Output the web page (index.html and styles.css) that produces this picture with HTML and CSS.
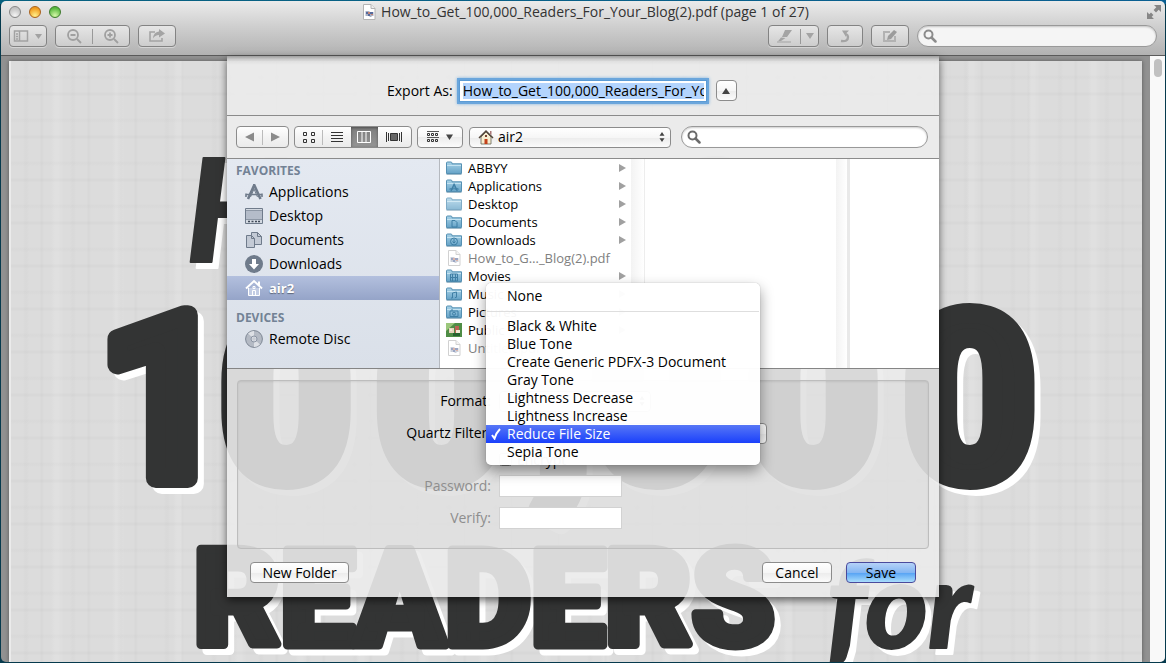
FILE: index.html
```html
<!DOCTYPE html>
<html lang="en">
<head>
    <meta charset="UTF-8">
    <meta name="viewport" content="width=device-width, initial-scale=1.0">
    <title>How_to_Get_100,000_Readers_For_Your_Blog(2).pdf</title>
    <link rel="stylesheet" href="styles.css">
</head>
<body>
    <svg class="defs" aria-hidden="true">
        <defs>
            <linearGradient id="folder-fill" x1="0" y1="0" x2="0" y2="1">
                <stop offset="0" stop-color="#a9d3e8"/>
                <stop offset="1" stop-color="#66a3c7"/>
            </linearGradient>
            <symbol id="folder" viewBox="0 0 16 14">
                <path d="M.5 12.500V2q0-1 1-1h3.500q.8 0 1 1v.8h9.500v9.700z" fill="url(#folder-fill)" stroke="#5590b3"/>
                <path d="M1 4.500h14" stroke="#c3e2f1"/>
                <path d="M.5 13.500h15" stroke="#3d7394" stroke-opacity=".5"/>
            </symbol>
            <symbol id="pdf" viewBox="0 0 16 16">
                <path d="M2.500.5h7.500l4 4v11H2.500z" fill="#fff" stroke="#b4b4b4"/>
                <path d="M10 .5v4h4" fill="#eee" stroke="#b4b4b4"/>
                <path d="M4.500 7h4v1h4v4h-2v1h-2v-1h-4z" fill="#a9b1c4"/>
                <path d="M5 8h2v2H5zM9 8h3v2H9zM7 10h2v2H7z" fill="#566a9c"/>
                <path d="M7 8h2v2H7zM10 10h2v1h-2z" fill="#c78473"/>
            </symbol>
            <symbol id="search" viewBox="0 0 14 14">
                <circle cx="5.500" cy="5.500" r="4" fill="none" stroke="currentColor" stroke-width="2"/>
                <path d="M8.500 8.500l4 4" stroke="currentColor" stroke-width="2.500" stroke-linecap="round"/>
            </symbol>
            <symbol id="apps" viewBox="0 0 18 18">
                <path d="M9.500 1.500L3 16M9 1.500L15.500 16" stroke="currentColor" stroke-width="2.600" fill="none"/>
                <path d="M9 6l-3.500 8M9 6l3.500 8" stroke="currentColor" stroke-width="1" fill="none"/>
                <path d="M1 11.500h16M1 14v-3.500M17 14v-3.500" stroke="currentColor" stroke-width="1.600" fill="none"/>
            </symbol>
            <symbol id="updown" viewBox="0 0 6 10">
                <path d="M3 0l2.500 3.800h-5zM3 10L.5 6.200h5z" fill="#444"/>
            </symbol>
        </defs>
    </svg>

    <div class="window">
        <header class="header">
            <div class="titlebar">
                <div class="lights">
                    <button class="light" aria-label="Close"></button>
                    <button class="light light-min" aria-label="Minimize"></button>
                    <button class="light light-max" aria-label="Zoom"></button>
                </div>
                <h1 class="title">
                    <svg width="14" height="16" viewBox="1 0 14 16"><use href="#pdf" width="16" height="16"/></svg>
                    How_to_Get_100,000_Readers_For_Your_Blog(2).pdf (page 1 of 27)
                </h1>
                <button class="fullscreen" aria-label="Full screen">
                    <svg width="16" height="16" viewBox="0 0 16 16" fill="#868686"><path d="M8 1h7v7l-2.300-2.300L10 8.400 7.600 6l2.700-2.700zM1 8l2.300 2.300L5 8.600 7.400 11l-1.700 1.700L8 15H1z"/></svg>
                </button>
            </div>
            <div class="toolbar">
                <button class="tool tool-view" aria-label="View">
                    <svg width="30" height="14" viewBox="0 0 30 14"><path d="M1.500 2h13v10h-13zM6.500 2v10M3 5h2M3 7.500h2M3 10h2" fill="none" stroke="#a2a2a2" stroke-width="1.500"/><path d="M22 5h7l-3.500 5z" fill="#a2a2a2"/></svg>
                </button>
                <div class="tool tool-zoom">
                    <button aria-label="Zoom out"><svg width="16" height="16" viewBox="0 0 16 16" fill="none" stroke="#a0a0a0" stroke-width="1.800"><circle cx="7" cy="7" r="5"/><path d="M4.500 7h5M11 11l4 4"/></svg></button>
                    <button aria-label="Zoom in"><svg width="16" height="16" viewBox="0 0 16 16" fill="none" stroke="#a0a0a0" stroke-width="1.800"><circle cx="7" cy="7" r="5"/><path d="M4.500 7h5M7 4.500v5M11 11l4 4"/></svg></button>
                </div>
                <button class="tool tool-share" aria-label="Share">
                    <svg width="18" height="16" viewBox="0 0 18 16"><path d="M7 4H2v9h12v-3" fill="none" stroke="#a4a4a4" stroke-width="1.600"/><path d="M11 1l6 4.500-6 4V7Q7 7 5 10.500 5.500 4 11 3.500z" fill="#a4a4a4"/></svg>
                </button>
                <div class="tool tool-mark">
                    <button aria-label="Highlight"><svg width="18" height="14" viewBox="0 0 18 14" fill="#a4a4a4"><path d="M9 1h7l-5 7H6zM5 8.500l4.500.5L5 12l-3 .2z"/><path d="M1 12.500h14v1H1z"/></svg></button>
                    <button aria-label="Highlight options"><svg width="8" height="6" viewBox="0 0 8 6"><path d="M0 0h8L4 6z" fill="#a4a4a4"/></svg></button>
                </div>
                <button class="tool tool-rotate" aria-label="Rotate">
                    <svg width="14" height="14" viewBox="0 0 14 14"><path d="M3 12q7 1 7-4 0-2-2-3" fill="none" stroke="#a4a4a4" stroke-width="2.400"/><path d="M4 1.500h7L8.500 4l-.5 4z" fill="#a4a4a4"/></svg>
                </button>
                <button class="tool tool-edit" aria-label="Edit">
                    <svg width="16" height="14" viewBox="0 0 16 14"><path d="M8 3H2v9h11V7" fill="none" stroke="#b2b2b2" stroke-width="2"/><path d="M12 1l3 2-6 7-4 1 1-4z" fill="#9c9c9c"/></svg>
                </button>
                <label class="search search-top">
                    <svg width="14" height="14"><use href="#search"/></svg>
                    <input type="search" aria-label="Search document">
                </label>
            </div>
        </header>

        <main class="viewer">
            <div class="page">
                <svg class="poster" viewBox="0 0 1133 601">
                    <g class="poster-ink">
                        <text class="script script-big" x="176" y="201">How to Get</text>
                        <text class="digits" x="89 211 367 525" y="418">100,</text>
                        <text class="digits" x="582 739 896" y="418">000</text>
                        <text class="caps" x="184" y="585">READERS</text>
                        <text class="script" x="818" y="588">for</text>
                    </g>
                </svg>
            </div>
            <div class="scrollbar"><div class="thumb"></div></div>
        </main>

        <form class="sheet">
            <div class="export">
                <label for="export-name">Export As:</label>
                <input id="export-name" class="export-name" type="text" value="How_to_Get_100,000_Readers_For_Your_Blog(2).pdf">
                <button type="button" class="btn disclose" aria-label="Collapse"><svg width="8" height="6" viewBox="0 0 8 6"><path d="M4 0l4 6H0z" fill="#444"/></svg></button>
            </div>

            <div class="nav">
                <div class="segments seg-history">
                    <button type="button" aria-label="Back"><svg width="9" height="10" viewBox="0 0 9 10"><path d="M9 .5v9L0 5z" fill="#8b8b8b"/></svg></button>
                    <button type="button" aria-label="Forward"><svg width="9" height="10" viewBox="0 0 9 10"><path d="M0 .5v9L9 5z" fill="#8b8b8b"/></svg></button>
                </div>
                <div class="segments seg-views">
                    <button type="button" aria-label="Icons"><svg width="12" height="11" viewBox="0 0 12 11" fill="none" stroke="#333"><path d="M.5.5h3v3h-3zM8.500.5h3v3h-3zM.5 7.500h3v3h-3zM8.500 7.500h3v3h-3z"/></svg></button>
                    <button type="button" aria-label="List"><svg width="12" height="11" viewBox="0 0 12 11" stroke="#333"><path d="M0 .5h12M0 3.500h12M0 6.500h12M0 9.500h12"/></svg></button>
                    <button type="button" class="active" aria-label="Columns"><svg width="14" height="12" viewBox="0 0 14 12" fill="none" stroke="#fff"><path d="M.5.5h13v11H.5zM5 1v10M9 1v10"/></svg></button>
                    <button type="button" aria-label="Cover flow"><svg width="16" height="10" viewBox="0 0 16 10" stroke="#333"><path d="M.5 0v10M2.500 1v8M13.500 1v8M15.500 0v10"/><path d="M4.500 1.500h7v7h-7z" fill="#666"/></svg></button>
                </div>
                <button type="button" class="btn arrange" aria-label="Arrange">
                    <svg width="26" height="12" viewBox="0 0 26 12"><path d="M0 .5h12M0 6.500h12" stroke="#555"/><path d="M.5 2.500h2v2h-2zM4.500 2.500h2v2h-2zM8.500 2.500h2v2h-2zM.5 8.500h2v2h-2zM4.500 8.500h2v2h-2zM8.500 8.500h2v2h-2z" fill="none" stroke="#333"/><path d="M19 3.500h7L22.500 9z" fill="#444"/></svg>
                </button>
                <div class="popup popup-place">
                    <svg class="popup-icon" width="16" height="16" viewBox="0 0 16 16"><path d="M3 8v7h10V8L8 3z" fill="#f7edcf" stroke="#665" stroke-width=".8"/><path d="M1 9l7-7 7 7" fill="none" stroke="#54463a" stroke-width="1.500"/><path d="M12 2h1.500v4L12 5z" fill="#a77"/><path d="M6.500 10h3v5h-3z" fill="#c4411b"/><path d="M7 6h2v2H7z" fill="#743"/></svg>
                    <select aria-label="Location"><option>air2</option></select>
                    <svg class="popup-arrows" width="6" height="10"><use href="#updown"/></svg>
                </div>
                <label class="search search-files">
                    <svg width="14" height="14"><use href="#search"/></svg>
                    <input type="search" aria-label="Search files">
                </label>
            </div>

            <div class="browser">
                <nav class="sidebar">
                    <h2>FAVORITES</h2>
                    <a href="#"><svg width="18" height="18"><use href="#apps"/></svg>Applications</a>
                    <a href="#"><svg width="18" height="18" viewBox="0 0 18 18"><path d="M.5 1.500h17v15H.5z" fill="#d3d9e1" stroke="currentColor"/><path d="M1 4h16v8H1z" fill="#b4bcc9"/><path d="M1 3.500h16M1 12.500h16" stroke="currentColor" stroke-opacity=".7"/><path d="M3 14.500h2M6.500 14.500h2M10 14.500h2M13 14.500h2" stroke="#3f4957" stroke-width="1.500"/></svg>Desktop</a>
                    <a href="#"><svg width="18" height="18" viewBox="0 0 18 18" fill="#c3cad5" stroke="currentColor"><path d="M6.500 1.500h6l4 4v8h-10z"/><path d="M12.500 1.500v4h4" fill="none"/><path d="M1.500 4.500h5l3 3v9h-8z"/><path d="M6.500 4.500v3h3" fill="none"/></svg>Documents</a>
                    <a href="#"><svg width="18" height="18" viewBox="0 0 18 18"><circle cx="9" cy="9" r="9" fill="currentColor"/><path d="M7 4h4v5h3l-5 5.500L4 9h3z" fill="#fff"/></svg>Downloads</a>
                    <a href="#" class="current"><svg width="18" height="18" viewBox="0 0 18 18" fill="none" stroke="#fff"><path d="M3.500 9v7.500h11V9" fill="#c3cde4"/><path d="M1 9.500L9 2l8 7.500" stroke-width="2"/><path d="M14 6V2.500" stroke-width="2"/><path d="M7.500 16.500v-5h3v5M8 7.500h2v2H8z"/></svg>air2</a>
                    <h2>DEVICES</h2>
                    <a href="#"><svg width="18" height="18" viewBox="0 0 18 18"><circle cx="9" cy="9" r="8.400" fill="#b4bac4" stroke="#7e8794"/><path d="M9 9L3 3.500Q6 .8 9 1zM9 9l6 5.500Q12 17 9 17z" fill="#dde0e5"/><circle cx="9" cy="9" r="3" fill="#d8dce3" stroke="#8c95a3"/><circle cx="9" cy="9" r="1" fill="#fff" stroke="#8c95a3" stroke-width=".5"/></svg>Remote Disc</a>
                </nav>
                <ul class="column files">
                    <li><svg width="16" height="14"><use href="#folder"/></svg><span>ABBYY</span></li>
                    <li><svg width="16" height="14"><use href="#folder"/><use href="#apps" class="glyph" x="3" y="4" width="10" height="9"/></svg><span>Applications</span></li>
                    <li><svg width="16" height="14" opacity=".75"><use href="#folder"/></svg><span>Desktop</span></li>
                    <li><svg width="16" height="14"><use href="#folder"/><path class="glyph-line" d="M6 5.500h3l2 2v4.500H6z"/></svg><span>Documents</span></li>
                    <li><svg width="16" height="14"><use href="#folder"/><circle class="glyph-line" cx="8" cy="8.500" r="3.500"/><path class="glyph-line" d="M8 6v4M6.500 8.500L8 10l1.500-1.500"/></svg><span>Downloads</span></li>
                    <li class="file"><svg width="16" height="16"><use href="#pdf"/></svg><span>How_to_G…_Blog(2).pdf</span></li>
                    <li><svg width="16" height="14"><use href="#folder"/><path class="glyph-line" d="M4.500 5h7v7h-7zM6.500 5v7M9.500 5v7M4.500 8.500h7"/></svg><span>Movies</span></li>
                    <li><svg width="16" height="14"><use href="#folder"/><path class="glyph-line" d="M6.500 11V6l4-1v5M5 11h1.500M9 10.500h1.500"/></svg><span>Music</span></li>
                    <li><svg width="16" height="14"><use href="#folder"/><path class="glyph-line" d="M4 6h8v5.500H4zM5 5h2"/><circle class="glyph-line" cx="8" cy="8.700" r="1.500"/></svg><span>Pictures</span></li>
                    <li><svg width="16" height="16" viewBox="0 0 16 16"><path d="M0 1h16v14H0z" fill="#4f8d46"/><path d="M0 1h9L0 9z" fill="#9cc77c"/><path d="M3 6h5v5H3z" fill="#e6d3bb"/><path d="M9 4h4v7H9z" fill="#b96353"/><path d="M4 7h2v2H4zM10 8h4v3h-4z" fill="#f3ead6"/><path d="M7 11h7v3H7z" fill="#26622f"/></svg><span>Public</span></li>
                    <li class="file"><svg width="16" height="16"><use href="#pdf"/></svg><span>Untitled.pdf</span></li>
                </ul>
                <div class="gutter"></div>
                <div class="column"></div>
                <div class="gutter gutter-last"></div>
            </div>

            <div class="lower">
                <fieldset class="options">
                    <label for="format">Format:</label>
                    <div class="popup popup-format">
                        <select id="format"><option>PDF</option></select>
                        <svg class="popup-arrows" width="6" height="10"><use href="#updown"/></svg>
                    </div>

                    <label for="filter">Quartz Filter:</label>
                    <div class="popup popup-filter">
                        <select id="filter"><option>Reduce File Size</option></select>
                        <div class="menu" role="listbox" aria-label="Quartz Filter">
                            <button type="button">None</button>
                            <hr>
                            <button type="button">Black &amp; White</button>
                            <button type="button">Blue Tone</button>
                            <button type="button">Create Generic PDFX-3 Document</button>
                            <button type="button">Gray Tone</button>
                            <button type="button">Lightness Decrease</button>
                            <button type="button">Lightness Increase</button>
                            <button type="button" class="chosen"><svg class="check" width="10" height="12" viewBox="0 0 10 12"><path d="M1 7l2.500 3.500Q5 5 9 1" fill="none" stroke="#fff" stroke-width="2"/></svg>Reduce File Size</button>
                            <button type="button">Sepia Tone</button>
                        </div>
                    </div>

                    <label class="encrypt"><input type="checkbox">Encrypt</label>

                    <label class="dim" for="password">Password:</label>
                    <input class="field" id="password" type="password">

                    <label class="dim" for="verify">Verify:</label>
                    <input class="field" id="verify" type="password">
                </fieldset>

                <div class="actions">
                    <button type="button" class="btn new-folder">New Folder</button>
                    <button type="button" class="btn action">Cancel</button>
                    <button type="button" class="btn action save">Save</button>
                </div>
            </div>
        </form>
    </div>
</body>
</html>
```
FILE: styles.css
```css
* {
    box-sizing: border-box;
}
body {
    margin: 0;
    padding: 1px;
    height: 100vh;
    overflow: hidden;
    background: linear-gradient(90deg, #07617f, #0a5f92) top / 100% 4px no-repeat, #063a4d;
    font-family: "Open Sans", "Noto Sans", sans-serif;
    font-size: 14px;
    line-height: 18px;
    color: #000;
}
button, input, select {
    font: inherit;
    color: inherit;
    margin: 0;
    padding: 0;
    border: 0;
    background: none;
}
button {
    display: flex;
    align-items: center;
    justify-content: center;
}
input:focus, select:focus {
    outline: none;
}
svg {
    flex: none;
}
.defs {
    position: absolute;
    width: 0;
    height: 0;
}
.window {
    position: relative;
    display: flex;
    flex-direction: column;
    height: 100%;
    border-radius: 5px;
    overflow: hidden;
}

/* title bar and toolbar */
.header {
    border-bottom: 1px solid #5a5a5a;
    padding-bottom: 8px;
    background: linear-gradient(#ebebeb, #d0d0d0 45%, #b2b2b2);
}
.titlebar {
    display: flex;
    align-items: center;
    height: 24px;
    padding: 0 3px 2px 8px;
}
.lights {
    flex: 1;
    display: flex;
    gap: 8px;
}
.light {
    width: 12px;
    height: 12px;
    border-radius: 50%;
    border: 1px solid #858585;
    background: radial-gradient(circle at 50% 85%, #f4f4f4, #c4c4c4 70%);
}
.light-min {
    border-color: #a8611c;
    background: radial-gradient(circle at 50% 85%, #fff08a, #f09a1c 75%);
}
.light-max {
    border-color: #3d7a2c;
    background: radial-gradient(circle at 50% 85%, #d5f8a8, #58b83e 75%);
}
.title {
    display: flex;
    align-items: center;
    gap: 5px;
    margin: 0;
    font-size: 14px;
    font-weight: 400;
    color: #333;
}
.fullscreen {
    flex: 1;
    justify-content: flex-end;
}
.toolbar {
    display: flex;
    gap: 8px;
    padding: 0 8px;
}
.tool {
    display: flex;
    align-items: center;
    justify-content: center;
    height: 22px;
    border: 1px solid #838383;
    border-radius: 4px;
    background: linear-gradient(#e6e6e6, #cdcdcd);
    box-shadow: 0 1px 0 rgba(255, 255, 255, 0.4);
}
.tool button {
    flex: 1;
    height: 15px;
}
.tool button + button {
    border-left: 1px solid #999;
}
.tool-view, .tool-share, .tool-edit {
    width: 38px;
}
.tool-zoom {
    width: 75px;
}
.tool-mark {
    width: 51px;
    margin-left: auto;
}
.tool-mark button + button {
    flex: none;
    width: 18px;
}
.tool-rotate {
    width: 36px;
}
.search {
    display: flex;
    align-items: center;
    gap: 4px;
    height: 22px;
    padding: 0 8px 0 5px;
    border: 1px solid #999;
    border-radius: 11px;
    background: #fff;
    color: #6b6b6b;
    box-shadow: inset 0 1px 2px rgba(0, 0, 0, 0.2);
}
.search input {
    flex: 1;
    min-width: 0;
}
.search-top {
    width: 240px;
    background: #f5f5f5;
    color: #8c8c8c;
}

/* document area */
.viewer {
    flex: 1;
    display: flex;
    min-height: 0;
    background: #919191;
}
.page {
    flex: 1;
    margin: 5px 8px 0;
    border-left: 2px solid #ebebeb;
    overflow: hidden;
    background:
        repeating-linear-gradient(90deg, transparent 0 12px, rgba(0, 0, 0, 0.01) 14px 16px, transparent 18px 29px, rgba(0, 0, 0, 0.02) 30px 31px, transparent 33px 47px),
        repeating-linear-gradient(transparent 0 14px, rgba(0, 0, 0, 0.01) 15px 17px, transparent 19px 31px, rgba(0, 0, 0, 0.02) 32px 34px, transparent 35px 43px),
        repeating-linear-gradient(90deg, transparent 0 40px, rgba(255, 255, 255, 0.12) 44px 47px, transparent 53px 61px),
        #dcdcdc;
    box-shadow: 0 0 4px rgba(0, 0, 0, 0.4);
}
.poster {
    display: block;
    width: 100%;
    margin-left: -1px;
    overflow: visible;
}
.poster-ink {
    fill: #333434;
    stroke: #333434;
    stroke-linejoin: round;
    filter: drop-shadow(6px 6px 0 #fff);
}
.script {
    font: italic 900 120px Lato, sans-serif;
    stroke-width: 2px;
}
.script-big {
    font-size: 144px;
}
.digits {
    font: 700 228px Roboto, sans-serif;
    stroke-width: 20px;
}
.caps {
    font: 900 133px Roboto, sans-serif;
    stroke-width: 9px;
}
.scrollbar {
    width: 15px;
    padding: 3px 3px 0 4px;
    background: #f9f9f9;
}
.thumb {
    height: 18px;
    border-radius: 4px;
    background: #c1c1c1;
}

/* save sheet hanging from the toolbar */
.sheet {
    position: absolute;
    top: 55px;
    left: 0;
    right: 0;
    width: 712px;
    margin: 0 auto;
    background: linear-gradient(rgba(0, 0, 0, 0.3), rgba(0, 0, 0, 0.06) 4px, transparent 9px), rgba(235, 235, 235, 0.9);
    box-shadow: 0 3px 8px rgba(0, 0, 0, 0.6);
}
.btn {
    height: 21px;
    border: 1px solid #8c8c8c;
    border-radius: 4px;
    background: linear-gradient(#fff, #f6f6f6 50%, #ececec 52%, #fbfbfb);
}
.export {
    display: flex;
    align-items: center;
    height: 60px;
    padding: 10px 0 0 160px;
    border-bottom: 1px solid #8b8b8b;
}
.export-name {
    width: 248px;
    height: 22px;
    margin: 0 9px 0 6px;
    padding: 2px 2px 2px 3px;
    border: 1px solid #5b9bd5;
    background: linear-gradient(#b3d4fd, #b3d4fd) content-box, #fff;
    box-shadow: 0 0 0 2px #6ba6dc, 0 0 3px 2px #7fb2e0;
}
.disclose {
    width: 21px;
}
.nav {
    display: flex;
    align-items: center;
    gap: 5px;
    height: 43px;
    padding: 0 11px 0 9px;
    border-bottom: 1px solid #8b8b8b;
    background: rgba(235, 235, 235, 0.8);
    background-clip: padding-box;
}
.segments {
    display: flex;
    align-items: center;
    height: 22px;
    border: 1px solid #8c8c8c;
    border-radius: 4px;
    overflow: hidden;
    background: linear-gradient(#fff, #f3f3f3 50%, #ebebeb);
}
.segments button {
    flex: 1;
    height: 15px;
}
.segments button + button {
    border-left: 1px solid #bbb;
}
.segments .active, .segments .active + button {
    height: 20px;
    border-left: 0;
}
.segments .active {
    background: linear-gradient(#7e7e7e, #959595);
    box-shadow: inset 0 1px 3px rgba(0, 0, 0, 0.4);
}
.seg-history {
    width: 53px;
}
.seg-views {
    width: 118px;
}
.seg-views button:last-child {
    flex: none;
    width: 33px;
}
.arrange {
    width: 46px;
    height: 22px;
}
.popup {
    position: relative;
    height: 21px;
}
.popup select {
    display: block;
    width: 100%;
    height: 100%;
    padding: 0 20px 0 8px;
    appearance: none;
    border: 1px solid #8c8c8c;
    border-radius: 4px;
    background: linear-gradient(#fff, #f6f6f6 50%, #ececec 52%, #fbfbfb);
}
.popup-arrows {
    position: absolute;
    right: 6px;
    top: 5px;
}
.popup-icon {
    position: absolute;
    left: 9px;
    top: 2px;
}
.popup-place {
    width: 202px;
    margin: 0 5px 0 1px;
}
.popup-place select {
    padding-left: 28px;
}
.search-files {
    flex: 1;
    min-width: 0;
}

/* file browser */
.browser {
    display: flex;
    height: 210px;
    border-bottom: 1px solid #858585;
    background: #fff;
}
.sidebar {
    width: 213px;
    border-right: 1px solid #b5b9bf;
    background: linear-gradient(#e4e9f1, #dae0e9);
}
.sidebar h2 {
    margin: 0;
    padding: 3px 9px 0;
    font-size: 12px;
    font-weight: 700;
    color: #738295;
}
.sidebar a {
    display: flex;
    align-items: center;
    gap: 6px;
    height: 24px;
    padding-left: 18px;
    color: #000;
    text-decoration: none;
}
.sidebar a svg {
    color: #6f7b8b;
}
.sidebar .current {
    color: #fff;
    font-size: 13px;
    font-weight: 700;
    text-shadow: 0 1px 1px rgba(0, 0, 0, 0.4);
    background: linear-gradient(#b3c0de, #95a4c8);
}
.sidebar .current + h2 {
    padding-top: 9px;
}
.column {
    width: 191px;
    margin: 0;
    padding: 0;
    list-style: none;
    font-size: 13px;
}
.files li {
    display: flex;
    align-items: center;
    gap: 6px;
    height: 18px;
    padding: 0 5px 0 6px;
}
.files span {
    flex: 1;
}
.files li::after {
    content: "";
    border-left: 7px solid #a0a0a0;
    border-top: 4px solid transparent;
    border-bottom: 4px solid transparent;
}
.files .file {
    color: #808080;
}
.files .file::after {
    display: none;
}
.files .file svg {
    opacity: 0.6;
}
.glyph {
    color: #3f7fa5;
}
.glyph-line {
    fill: none;
    stroke: #3f7fa5;
}
.gutter {
    width: 14px;
    border-right: 1px solid #ededed;
    background: linear-gradient(90deg, #f3f3f3, #fff);
}
.gutter-last {
    border-right: 3px solid #e9e9e9;
}

/* format options */
.lower {
    padding: 11px 10px 14px;
}
.options {
    display: grid;
    grid-template-columns: 253px 1fr;
    grid-template-rows: 32px 32px 21px 32px 32px;
    align-items: center;
    column-gap: 8px;
    margin: 0;
    padding: 4px 0 14px;
    border: 1px solid #bdbdbd;
    border-radius: 4px;
    background: rgba(0, 0, 0, 0.04);
    box-shadow: inset 0 1px 2px rgba(0, 0, 0, 0.08);
}
.options > label {
    text-align: right;
}
.popup-format {
    width: 152px;
}
.popup-filter {
    width: 268px;
}
.options .encrypt {
    grid-column: 2;
    display: flex;
    align-items: center;
    gap: 5px;
}
.options .dim {
    color: #8e8e8e;
}
.field {
    width: 123px;
    height: 22px;
    border: 1px solid #d2d2d2;
    background: #fff;
}
.menu {
    position: absolute;
    left: -13px;
    top: -140px;
    width: 274px;
    padding: 4px 0;
    border-radius: 5px;
    background: rgba(255, 255, 255, 0.97);
    box-shadow: 0 0 1px rgba(0, 0, 0, 0.4), 0 6px 14px rgba(0, 0, 0, 0.4);
}
.menu button {
    position: relative;
    justify-content: flex-start;
    width: 100%;
    height: 18px;
    padding-left: 21px;
}
.menu hr {
    margin: 6px 1px 5px;
    border: 0;
    border-top: 1px solid #dedede;
}
.menu .chosen {
    color: #fff;
    background: linear-gradient(#5777f6, #1a40fb);
}
.check {
    position: absolute;
    left: 5px;
    top: 3px;
}
.actions {
    display: flex;
    gap: 14px;
    padding: 13px 13px 0;
}
.new-folder {
    width: 99px;
    margin-right: auto;
}
.action {
    width: 70px;
}
.save {
    border-color: #4a4a9c;
    background: linear-gradient(#b5d2f7, #84b6f3 50%, #55a2f4 52%, #a9ddfc);
}
```
